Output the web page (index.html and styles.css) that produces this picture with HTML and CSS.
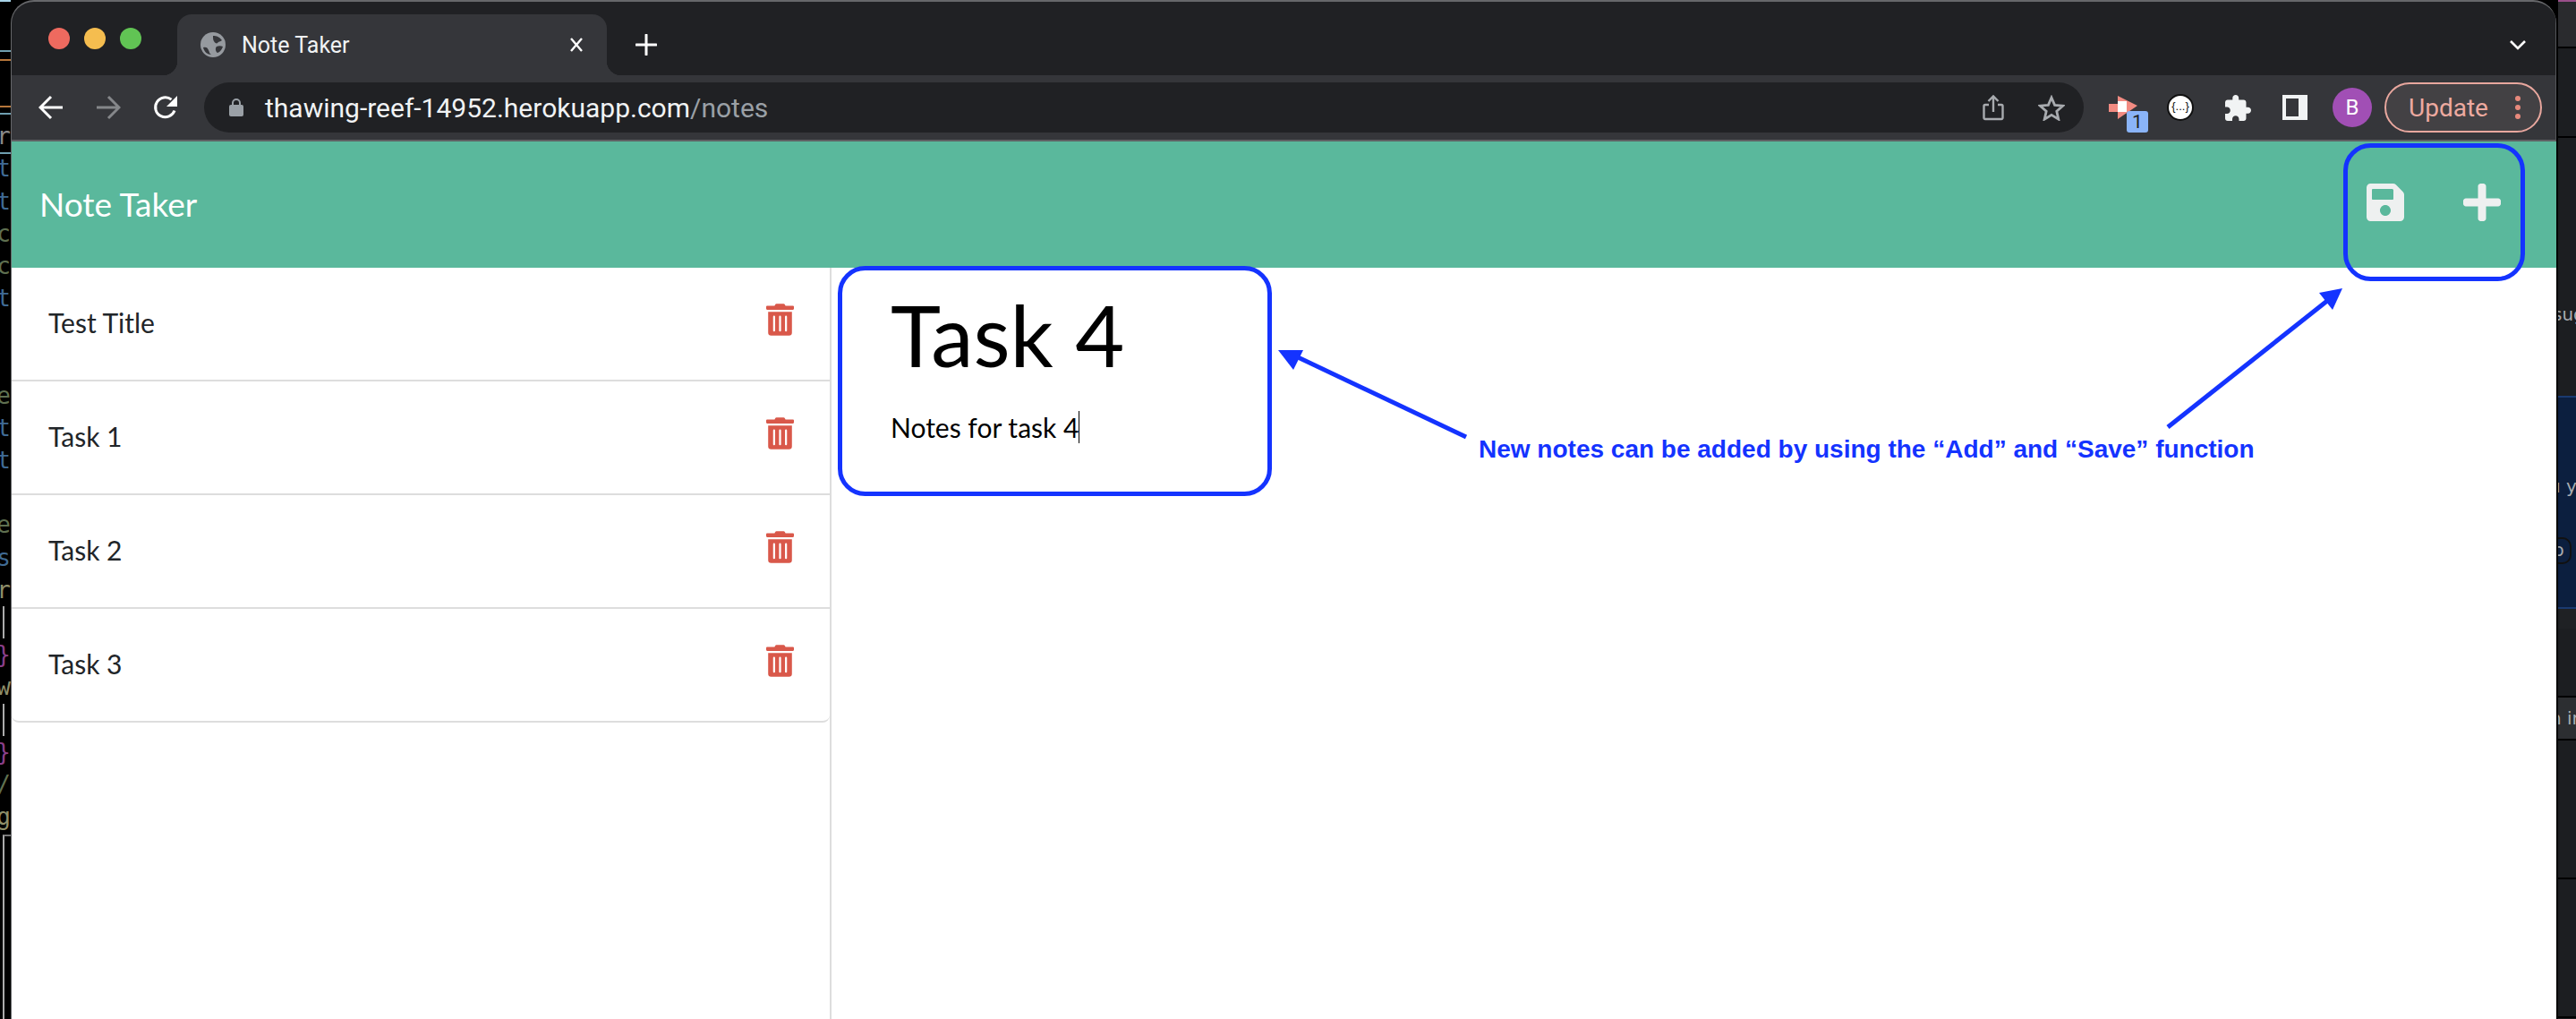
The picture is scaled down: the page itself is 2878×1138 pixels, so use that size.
FILE: index.html
```html
<!DOCTYPE html>
<html>
<head>
    <title>Note Taker</title>
    <link rel="stylesheet" href="styles.css">
</head>
<body>
    <div class="desktop">
        <div class="code-strip">
            <div class="code-line"></div>
            <div class="code-line code-grey">or</div>
            <div class="code-line code-blue">t</div>
            <div class="code-line code-blue">t</div>
            <div class="code-line code-green">c</div>
            <div class="code-line code-green">c</div>
            <div class="code-line code-blue">t</div>
            <div class="code-line"></div>
            <div class="code-line"></div>
            <div class="code-line code-green">e</div>
            <div class="code-line code-blue">t</div>
            <div class="code-line code-blue">t</div>
            <div class="code-line"></div>
            <div class="code-line code-green">e</div>
            <div class="code-line code-blue">s</div>
            <div class="code-line code-tan">r</div>
            <div class="code-line code-bar"></div>
            <div class="code-line code-purple">}</div>
            <div class="code-line code-tan">w</div>
            <div class="code-line code-bar"></div>
            <div class="code-line code-purple">}</div>
            <div class="code-line code-green">/</div>
            <div class="code-line code-tan">g</div>
            <div class="code-frame"></div>
        </div>

        <div class="window">
            <div class="tab-strip">
                <div class="lights">
                    <span class="light light-red"></span>
                    <span class="light light-yellow"></span>
                    <span class="light light-green"></span>
                </div>
                <div class="tab">
                    <svg class="globe" viewBox="0 0 28 28">
                        <circle cx="14" cy="14" r="14" fill="#969a9f"/>
                        <path d="M3 17c3-1 5 0 6 3 1 2 1 4 3 5-4 0-8-3-9-8zM14 4c4 0 7 1 10 5-2 2-4 1-5 3-1 1-3 0-4-2-1-1-1-4-1-6zM18 16c2-1 5-1 7 0-1 3-3 6-6 7-2-1-3-5-1-7z" fill="#35363a"/>
                    </svg>
                    <span class="tab-title">Note Taker</span>
                    <svg class="tab-close" viewBox="0 0 16 16">
                        <path d="M2 1l12 14M14 1L2 15" stroke="#fff" stroke-width="2.4" fill="none"/>
                    </svg>
                </div>
                <svg class="new-tab" viewBox="0 0 24 24">
                    <path d="M12 1v22M1 12h22" stroke="#fff" stroke-width="3" stroke-linecap="round" fill="none"/>
                </svg>
                <svg class="tab-menu" viewBox="0 0 20 12">
                    <path d="M2 2l8 8 8-8" stroke="#fff" stroke-width="2.6" fill="none"/>
                </svg>
            </div>

            <div class="toolbar">
                <svg class="nav-icon" viewBox="0 0 28 28">
                    <path d="M27 14H3M14 2L2 14l12 12" stroke="#fff" stroke-width="3" fill="none"/>
                </svg>
                <svg class="nav-icon" viewBox="0 0 28 28">
                    <path d="M1 14h24M14 2l12 12-12 12" stroke="#85878a" stroke-width="3" fill="none"/>
                </svg>
                <svg class="nav-icon" viewBox="0 0 28 28">
                    <path d="M24 17.500A11 11 0 1 1 20.500 5.200" stroke="#fff" stroke-width="3" fill="none"/>
                    <path d="M27 1v12H15z" fill="#fff"/>
                </svg>
                <div class="address-bar">
                    <svg class="lock" viewBox="0 0 16 20">
                        <path d="M4 8V5a4 4 0 0 1 8 0v3" stroke="#9aa0a6" stroke-width="2" fill="none"/>
                        <rect y="7" width="16" height="13" rx="2" fill="#9aa0a6"/>
                    </svg>
                    <span class="url">thawing-reef-14952.herokuapp.com<span class="url-path">/notes</span></span>
                    <svg class="share" viewBox="0 0 24 30">
                        <path d="M7 12H3a1.500 1.500 0 0 0-1.500 1.500v13A1.500 1.500 0 0 0 3 28h18a1.500 1.500 0 0 0 1.500-1.500v-13A1.500 1.500 0 0 0 21 12h-4" stroke="#a8abaf" stroke-width="2.400" fill="none"/>
                        <path d="M12 20V3M6.500 8L12 2.500 17.500 8" stroke="#a8abaf" stroke-width="2.400" fill="none"/>
                    </svg>
                    <svg class="star" viewBox="0 0 30 29">
                        <path d="M15 3l3.600 8.400 9 .8-6.800 6 2 8.900-7.800-4.700-7.800 4.700 2-8.900-6.800-6 9-.8z" stroke="#a8abaf" stroke-width="2.800" fill="none"/>
                    </svg>
                </div>
                <div class="ext-icons">
                    <div class="ext-record">
                        <svg class="ext-arrow" viewBox="0 0 32 26">
                            <path d="M0 9h10V0l22 11-22 15v-8H0z" fill="#f28b82"/>
                            <path d="M10 6h10v12H10z" fill="#fff"/>
                        </svg>
                        <span class="ext-badge">1</span>
                    </div>
                    <div class="ext-json">{...}</div>
                    <svg class="ext-puzzle" viewBox="2 1 21 21">
                        <path d="M20.500 11H19V7c0-1.100-.9-2-2-2h-4V3.500C13 2.120 11.880 1 10.500 1S8 2.120 8 3.500V5H4c-1.100 0-1.990.9-1.990 2v3.800H3.500c1.490 0 2.700 1.210 2.700 2.700s-1.210 2.700-2.700 2.700H2V20c0 1.100.9 2 2 2h3.800v-1.500c0-1.490 1.210-2.700 2.700-2.700 1.490 0 2.700 1.210 2.700 2.700V22H17c1.100 0 2-.9 2-2v-4h1.500c1.380 0 2.500-1.120 2.500-2.500S21.880 11 20.500 11z" fill="#f1f3f4"/>
                    </svg>
                    <div class="ext-panel"></div>
                    <div class="avatar">B</div>
                    <div class="update-btn">
                        <span>Update</span>
                        <span class="update-dots"><i></i><i></i><i></i></span>
                    </div>
                </div>
            </div>

            <div class="page">
                <div class="navbar">
                    <div class="brand">Note Taker</div>
                    <div class="nav-actions">
                        <svg class="nav-action" viewBox="0 32 448 448">
                            <path d="M433.941 129.941l-83.882-83.882A48 48 0 0 0 316.118 32H48C21.490 32 0 53.490 0 80v352c0 26.510 21.490 48 48 48h352c26.510 0 48-21.490 48-48V163.882a48 48 0 0 0-14.059-33.941zM224 416c-35.346 0-64-28.654-64-64 0-35.346 28.654-64 64-64s64 28.654 64 64c0 35.346-28.654 64-64 64zm96-304.520V212c0 6.627-5.373 12-12 12H76c-6.627 0-12-5.373-12-12V108c0-6.627 5.373-12 12-12h228.520c3.183 0 6.235 1.264 8.485 3.515l3.480 3.480A11.996 11.996 0 0 1 320 111.480z"/>
                        </svg>
                        <svg class="nav-action" viewBox="0 32 448 448">
                            <path d="M416 208H272V64c0-17.670-14.330-32-32-32h-32c-17.670 0-32 14.330-32 32v144H32c-17.670 0-32 14.330-32 32v32c0 17.670 14.330 32 32 32h144v144c0 17.670 14.330 32 32 32h32c17.670 0 32-14.330 32-32V304h144c17.670 0 32-14.330 32-32v-32c0-17.670-14.330-32-32-32z"/>
                        </svg>
                    </div>
                </div>
                <div class="content">
                    <div class="note-list">
                        <div class="note-row">
                            <span class="note-name">Test Title</span>
                            <svg class="trash" viewBox="0 0 448 512"><use href="#trash-path"/></svg>
                        </div>
                        <div class="note-row">
                            <span class="note-name">Task 1</span>
                            <svg class="trash" viewBox="0 0 448 512"><use href="#trash-path"/></svg>
                        </div>
                        <div class="note-row">
                            <span class="note-name">Task 2</span>
                            <svg class="trash" viewBox="0 0 448 512"><use href="#trash-path"/></svg>
                        </div>
                        <div class="note-row note-row-last">
                            <span class="note-name">Task 3</span>
                            <svg class="trash" viewBox="0 0 448 512"><use href="#trash-path"/></svg>
                        </div>
                    </div>
                    <div class="note-editor">
                        <div class="note-title">Task 4</div>
                        <div class="note-body">Notes for task 4<span class="caret"></span></div>
                    </div>
                </div>
            </div>
        </div>

        <div class="side-strip">
            <div class="side-top"></div>
            <div class="side-mid"></div>
            <div class="side-text">sug</div>
            <div class="side-banner">
                <div class="side-y">u y</div>
                <div class="side-pill">p</div>
            </div>
            <div class="side-gap"></div>
            <div class="side-row">n in</div>
            <div class="side-cell"></div>
            <div class="side-cell"></div>
        </div>
    </div>

    <svg class="defs-only" width="0" height="0">
        <path id="trash-path" d="M32 464a48 48 0 0 0 48 48h288a48 48 0 0 0 48-48V128H32zm272-256a16 16 0 0 1 32 0v224a16 16 0 0 1-32 0zm-96 0a16 16 0 0 1 32 0v224a16 16 0 0 1-32 0zm-96 0a16 16 0 0 1 32 0v224a16 16 0 0 1-32 0zM432 32H312l-9.400-18.700A24 24 0 0 0 281.100 0H166.800a23.720 23.720 0 0 0-21.400 13.300L136 32H16A16 16 0 0 0 0 48v32a16 16 0 0 0 16 16h416a16 16 0 0 0 16-16V48a16 16 0 0 0-16-16z"/>
    </svg>

    <!-- markup drawn on top of the screenshot -->
    <svg class="markup" viewBox="0 0 2878 1138">
        <rect x="2620.500" y="162.500" width="198" height="149" rx="28" class="markup-line"/>
        <rect x="938.500" y="299.500" width="480" height="252" rx="28" class="markup-line"/>
        <path d="M1638 488L1448 398" class="markup-line"/>
        <path d="M1428 391h28l-11 22z" class="markup-head"/>
        <path d="M2422 477L2600 336" class="markup-line"/>
        <path d="M2617 322l-26 5 15 19z" class="markup-head"/>
    </svg>
    <div class="markup-text">New notes can be added by using the “Add” and “Save” function</div>
</body>
</html>
```

FILE: styles.css
```css
* {
    box-sizing: border-box;
}

html, body {
    margin: 0;
    padding: 0;
}

body {
    width: 2878px;
    height: 1138px;
    overflow: hidden;
    position: relative;
    background-color: #000;
    font-family: Roboto, "Liberation Sans", sans-serif;
}

.desktop {
    display: flex;
    height: 1138px;
}

/* editor peeking out on the left */
.code-strip {
    width: 12px;
    flex-shrink: 0;
    overflow: hidden;
    padding-top: 98px;
    background-color: #000;
    background-image:
        linear-gradient(#a8d4e8, #a8d4e8),
        linear-gradient(#6f9fb0, #6f9fb0),
        linear-gradient(#b5763a, #b5763a),
        linear-gradient(#b5763a, #b5763a),
        linear-gradient(#6f9fb0, #6f9fb0),
        linear-gradient(#6f9fb0, #6f9fb0);
    background-size: 100% 2px;
    background-repeat: no-repeat;
    background-position: 0 0, 0 56px, 0 66px, 0 118px, 0 126px, 0 170px;
    font-family: "DejaVu Sans Mono", monospace;
    font-size: 26px;
}

.code-line {
    height: 36.2px;
    line-height: 36px;
    display: flex;
    justify-content: flex-end;
    white-space: nowrap;
}

.code-grey { color: #8a8a8a; }
.code-blue { color: #3f6a94; }
.code-green { color: #5f7050; }
.code-tan { color: #8f8f6a; }
.code-purple { color: #8a3f8a; }

.code-bar {
    border-right: 2px solid #aaa;
    width: 5px;
}

.code-frame {
    width: 12px;
    height: 220px;
    margin: 2px 0 0 3px;
    border-left: 2px solid #aaa;
    border-top: 2px solid #777;
}

.window {
    flex: 1;
    display: flex;
    flex-direction: column;
    min-width: 0;
    border-top: 2px solid #66676a;
    border-left: 1px solid #66676a;
    border-top-left-radius: 26px;
    border-top-right-radius: 26px;
    overflow: hidden;
    background-color: #202124;
}

.tab-strip {
    height: 82px;
    flex-shrink: 0;
    display: flex;
    align-items: flex-end;
    padding-left: 41px;
    padding-right: 32px;
    border-right: 1px solid #55565a;
}

.lights {
    display: flex;
    gap: 16px;
    align-self: flex-start;
    margin-top: 29px;
}

.light {
    width: 24px;
    height: 24px;
    border-radius: 50%;
}

.light-red { background-color: #ee6a5f; }
.light-yellow { background-color: #f5bd4f; }
.light-green { background-color: #61c454; }

.tab {
    position: relative;
    width: 480px;
    height: 68px;
    margin-left: 40px;
    display: flex;
    align-items: center;
    padding: 0 26px 0 26px;
    background-color: #35363a;
    border-radius: 16px 16px 0 0;
}

.tab::before,
.tab::after {
    content: "";
    position: absolute;
    bottom: 0;
    width: 16px;
    height: 16px;
}

.tab::before {
    left: -16px;
    background: radial-gradient(circle at 0 0, #202124 16px, #35363a 16.500px);
}

.tab::after {
    right: -16px;
    background: radial-gradient(circle at 100% 0, #202124 16px, #35363a 16.500px);
}

.globe {
    width: 28px;
    height: 28px;
    flex-shrink: 0;
}

.tab-title {
    margin-left: 18px;
    color: #f1f3f4;
    font-size: 25px;
    flex: 1;
}

.tab-close {
    width: 16px;
    height: 16px;
}

.new-tab {
    width: 24px;
    height: 24px;
    margin: 0 0 22px 32px;
}

.tab-menu {
    width: 20px;
    height: 12px;
    margin: 0 0 28px auto;
}

.toolbar {
    height: 74px;
    flex-shrink: 0;
    display: flex;
    align-items: center;
    gap: 36px;
    padding: 0 16px 0 30px;
    background-color: #35363a;
    border-bottom: 2px solid #5f6164;
    border-right: 1px solid #55565a;
}

.nav-icon {
    width: 28px;
    height: 28px;
    flex-shrink: 0;
}

.address-bar {
    width: 2100px;
    height: 56px;
    margin-left: -7px;
    flex-shrink: 0;
    display: flex;
    align-items: center;
    padding: 0 20px 0 28px;
    background-color: #202124;
    border-radius: 28px;
}

.lock {
    width: 16px;
    height: 20px;
    flex-shrink: 0;
}

.url {
    margin-left: 24px;
    flex: 1;
    color: #f1f3f4;
    font-size: 30px;
}

.url-path {
    color: #9aa0a6;
}

.share {
    width: 24px;
    height: 30px;
}

.star {
    width: 30px;
    height: 29px;
    margin: 0 1px 0 38px;
}

.ext-icons {
    display: flex;
    align-items: center;
    flex: 1;
    margin-left: -8px;
}

.ext-record {
    position: relative;
    width: 44px;
    height: 56px;
}

.ext-arrow {
    position: absolute;
    left: 0;
    top: 15px;
    width: 32px;
    height: 26px;
}

.ext-badge {
    position: absolute;
    right: 0;
    bottom: 0;
    width: 24px;
    height: 24px;
    background-color: #8ab4f8;
    color: #202124;
    border-radius: 3px;
    font-size: 21px;
    line-height: 24px;
    text-align: center;
}

.ext-json {
    width: 30px;
    height: 30px;
    margin-left: 21px;
    border-radius: 50%;
    background-color: #fff;
    border: 2px solid #111;
    color: #111;
    font-family: "Liberation Sans", sans-serif;
    font-size: 13px;
    line-height: 24px;
    text-align: center;
    white-space: nowrap;
}

.ext-puzzle {
    width: 29px;
    height: 29px;
    margin-left: 35px;
}

.ext-panel {
    width: 28px;
    height: 28px;
    margin-left: 35px;
    border: 4px solid #f1f3f4;
    border-right-width: 10px;
}

.avatar {
    width: 44px;
    height: 44px;
    margin-left: 28px;
    border-radius: 50%;
    background-color: #a14fb5;
    color: #fff;
    font-size: 24px;
    line-height: 44px;
    text-align: center;
}

.update-btn {
    width: 176px;
    height: 56px;
    margin-left: 14px;
    display: flex;
    align-items: center;
    justify-content: space-between;
    padding: 0 22px 0 25px;
    background-color: #434144;
    border: 2px solid #e8a79e;
    border-radius: 28px;
    color: #eeaaa0;
    font-size: 28px;
}

.update-dots {
    display: flex;
    flex-direction: column;
    gap: 4px;
}

.update-dots i {
    width: 6px;
    height: 6px;
    border-radius: 50%;
    background-color: #e8897c;
}

.page {
    flex: 1;
    display: flex;
    flex-direction: column;
    min-height: 0;
    background-color: #fff;
    font-family: Lato, "Liberation Sans", sans-serif;
}

.navbar {
    height: 141px;
    flex-shrink: 0;
    display: flex;
    align-items: center;
    justify-content: space-between;
    padding: 0 62px 0 31px;
    background-color: #5ab89c;
}

.brand {
    margin-bottom: 3px;
    color: #fff;
    font-size: 37px;
}

.nav-actions {
    display: flex;
    gap: 66px;
    margin-bottom: 5px;
}

.nav-action {
    width: 42px;
    height: 42px;
    fill: #eef0f0;
}

.content {
    flex: 1;
    display: flex;
    min-height: 0;
}

.note-list {
    width: 916px;
    flex-shrink: 0;
    border-right: 2px solid #ddd;
}

.note-row {
    height: 127px;
    display: flex;
    align-items: center;
    justify-content: space-between;
    padding: 0 40px 0 41px;
    border-bottom: 2px solid #ddd;
    color: #212529;
    font-size: 30px;
}

.note-name {
    margin-bottom: 3px;
}

.note-row-last {
    border-radius: 0 0 8px 8px;
}

.trash {
    width: 31px;
    height: 36px;
    margin-bottom: 10px;
    fill: #d9584a;
}

.note-editor {
    flex: 1;
    padding: 17px 0 0 66px;
    color: #000;
}

.note-title {
    font-size: 95px;
    line-height: 115px;
}

.note-body {
    margin-top: 28px;
    font-size: 30px;
    line-height: 36px;
}

.caret {
    display: inline-block;
    width: 1px;
    height: 36px;
    vertical-align: top;
    background-color: #000;
}

/* devtools peeking out on the right */
.side-strip {
    width: 22px;
    flex-shrink: 0;
    overflow: hidden;
    border-left: 2px solid #000;
    background-color: #1c1e21;
    color: #a8abaf;
    font-family: "DejaVu Sans", sans-serif;
    font-size: 20px;
    white-space: nowrap;
}

.side-top {
    height: 54px;
    background-color: #2a2b2e;
    border-top: 2px solid #9a4f8a;
    border-bottom: 2px solid #000;
}

.side-mid {
    height: 100px;
    border-bottom: 2px solid #000;
}

.side-text {
    height: 288px;
    padding-top: 186px;
    line-height: 22px;
    text-indent: -6px;
}

.side-banner {
    height: 238px;
    padding-top: 88px;
    background-color: #0c1f3f;
    border-top: 2px solid #1a3a70;
    border-bottom: 2px solid #1a3a70;
}

.side-y {
    height: 22px;
    line-height: 22px;
    margin-left: -10px;
}

.side-pill {
    width: 23px;
    height: 30px;
    margin: 46px 0 0 -8px;
    border: 2px solid #111;
    border-radius: 10px;
    line-height: 24px;
}

.side-gap {
    height: 99px;
    border-top: 22px solid #1f2124;
    border-bottom: 2px solid #000;
}

.side-row {
    height: 48px;
    line-height: 46px;
    text-indent: -9px;
    background-color: #2c2e31;
    border-bottom: 2px solid #000;
}

.side-cell {
    height: 155px;
    border-bottom: 2px solid #000;
}

.defs-only {
    position: absolute;
}

.markup {
    position: absolute;
    left: 0;
    top: 0;
    width: 2878px;
    height: 1138px;
    pointer-events: none;
}

.markup-line {
    fill: none;
    stroke: #1433ff;
    stroke-width: 5;
}

.markup-head {
    fill: #1433ff;
}

.markup-text {
    position: absolute;
    left: 1652px;
    top: 485px;
    color: #1433ff;
    font-family: "Liberation Sans", Arial, sans-serif;
    font-weight: bold;
    font-size: 28px;
    line-height: 34px;
    white-space: nowrap;
}
```
